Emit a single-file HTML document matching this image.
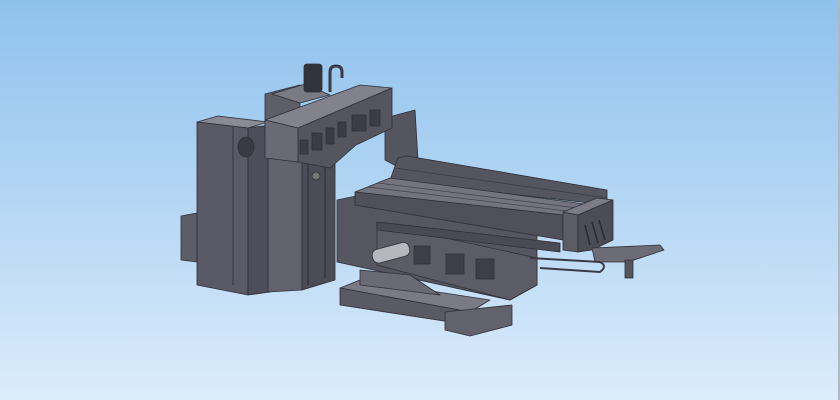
<!DOCTYPE html>
<html><head><style>
html,body{margin:0;padding:0}
body{width:840px;height:400px;overflow:hidden;background:linear-gradient(#8fc1ee 0%,#b4d6f4 50%,#dcecfb 100%);position:relative}
.edge{position:absolute;right:0;top:0;width:2px;height:400px;background:#b0b8c0}
</style></head><body>
<svg width="840" height="400" style="position:absolute;left:0;top:0" stroke="#2f2f38" stroke-width="0.8" stroke-linejoin="round">
<polygon points="181,216 197,213 197,262 181,260" fill="#5d5d68"/>
<polygon points="197,122 218,116 268,122 248,128" fill="#8a8a94"/>
<polygon points="197,122 248,128 248,295 197,285" fill="#5a5a66"/>
<polygon points="248,128 270,125 270,292 248,295" fill="#4e4e5a"/>
<line x1="233" y1="127" x2="233" y2="285"/>
<ellipse cx="246" cy="147" rx="8" ry="10" fill="#3a3a44"/>
<!-- base -->
<polygon points="337,200 395,188 537,225 537,285 510,300 337,262" fill="#565660"/>
<polygon points="377,223 537,258 537,285 510,300 377,265" fill="#5c5c66"/>
<g fill="#3e3e48"><rect x="414" y="246" width="16" height="18"/><rect x="446" y="254" width="18" height="20"/><rect x="476" y="259" width="18" height="20"/></g>
<!-- pillar -->
<polygon points="268,150 302,158 302,290 268,292" fill="#63636e"/>
<polygon points="302,158 335,150 335,280 302,290" fill="#4c4c57"/>
<line x1="308" y1="160" x2="308" y2="285" stroke="#222"/>
<line x1="325" y1="155" x2="325" y2="278" stroke="#222"/>
<polygon points="265,94 300,85 300,125 265,132" fill="#5e5e69"/>
<polygon points="272,94 305,84 330,95 300,103" fill="#7a7a84"/>
<rect x="304" y="64" width="18" height="28" rx="3" fill="#33333c"/>
<path d="M330,92 V72 Q330,66 336,66 Q342,66 342,72 V78" fill="none" stroke="#3a3a44" stroke-width="3"/>
<polygon points="385,118 415,110 418,160 400,168 385,160" fill="#55555f"/>
<polygon points="265,120 360,85 392,88 298,128" fill="#82828c"/>
<polygon points="298,128 392,88 392,128 356,145 330,168 298,162" fill="#55555f"/>
<polygon points="265,120 298,128 298,162 265,158" fill="#6a6a74"/>
<g fill="#3c3c46"><rect x="300" y="140" width="8" height="14"/><rect x="312" y="133" width="10" height="17"/><rect x="326" y="128" width="8" height="16"/><rect x="338" y="122" width="8" height="15"/><rect x="352" y="115" width="14" height="16"/><rect x="370" y="110" width="10" height="16"/></g>
<circle cx="316" cy="176" r="4" fill="#777"/>
<!-- bed -->
<polygon points="398,158 407,156 607,190 607,205 390,180" fill="#55555f"/>
<g stroke="#3a3a44"><line x1="395" y1="168" x2="607" y2="198"/></g>
<!-- table top -->
<polygon points="355,192 390,178 600,206 563,215" fill="#74747e"/>
<g stroke="#45454f"><line x1="368" y1="187" x2="575" y2="212"/><line x1="378" y1="183" x2="585" y2="209"/></g>
<polygon points="355,192 563,215 563,240 355,205" fill="#50505a"/>
<polygon points="377,222 560,243 560,252 377,230" fill="#4a4a54"/>
<!-- table end -->
<polygon points="563,212 597,198 613,200 578,215" fill="#7c7c86"/>
<polygon points="563,212 578,215 578,252 563,250" fill="#5c5c66"/>
<polygon points="578,215 613,200 613,240 592,250 578,252" fill="#4c4c56"/>
<g stroke="#2a2a33" stroke-width="1.5"><line x1="585" y1="225" x2="590" y2="245"/><line x1="592" y1="222" x2="598" y2="243"/><line x1="599" y1="220" x2="605" y2="240"/></g>
<polygon points="592,248 660,245 664,250 628,262 595,262" fill="#6c6c76"/>
<rect x="625" y="260" width="8" height="18" fill="#55555f"/>
<path d="M530,258 L600,262 Q608,266 600,272 L540,268" fill="none" stroke="#3a3a44" stroke-width="2"/>
<!-- chip pan & roller -->
<polygon points="340,288 360,280 490,300 470,312" fill="#7a7a84"/>
<polygon points="340,288 470,312 470,325 340,305" fill="#5a5a64"/>
<polygon points="445,312 512,305 512,325 470,336 445,330" fill="#62626c"/>
<polygon points="360,270 410,275 440,295 360,285" fill="#6a6a74"/>
<rect x="372" y="246" width="38" height="14" rx="6" transform="rotate(-15 390 253)" fill="#b7b7c0"/>
</svg>
<div class="edge"></div>
</body></html>
